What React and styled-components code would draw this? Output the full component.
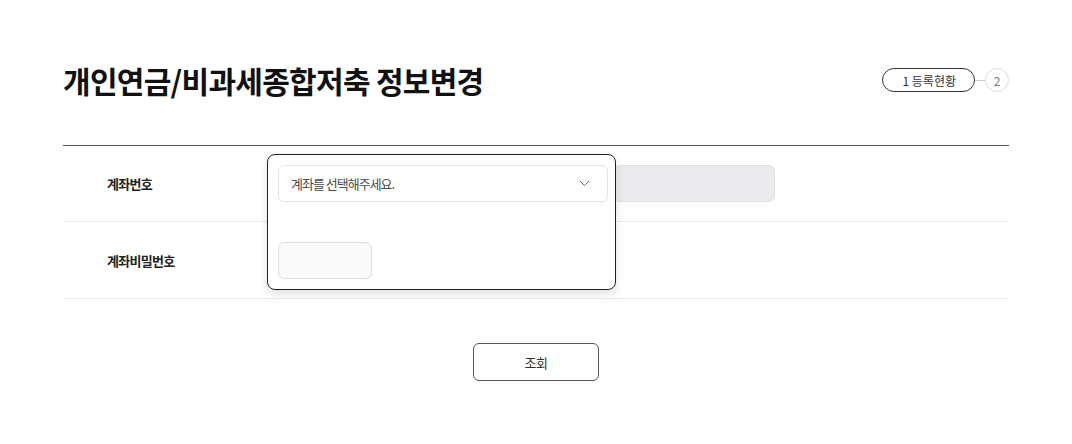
import React from 'react';
import styled, { createGlobalStyle } from 'styled-components';

const GlobalStyle = createGlobalStyle`
  * {
    box-sizing: border-box;
  }

  body {
    margin: 0;
    background: #fff;
    font-family: 'Noto Sans CJK KR', 'Noto Sans', sans-serif;
    color: #222;
  }
`;

const Page = styled.main`
  width: 946px;
  margin: 0 auto;
  padding-top: 56px;
`;

const Header = styled.header`
  display: flex;
  align-items: center;
  justify-content: space-between;
  height: 48px;
`;

const Title = styled.h1`
  margin: 0;
  font-size: 30px;
  font-weight: 700;
  letter-spacing: -0.7px;
  color: #111;
  line-height: 48px;
`;

const Stepper = styled.ol`
  display: flex;
  align-items: center;
  list-style: none;
  margin: 0;
  padding: 0;
`;

const Step = styled.li`
  display: flex;
  align-items: center;
  justify-content: center;
  height: 24px;
  min-width: 24px;
  padding: ${(props) => (props.$active ? '0 18px 0 19px' : '0')};
  border: 1px solid ${(props) => (props.$active ? '#333' : '#ddd')};
  border-radius: 12px;
  font-size: 12px;
  color: ${(props) => (props.$active ? '#333' : '#777')};
`;

const StepLine = styled.span`
  width: 10px;
  height: 1px;
  background: #ccc;
`;

const Table = styled.section`
  position: relative;
  margin-top: 41px;
  border-top: 1px solid #555;
`;

const Row = styled.div`
  display: grid;
  grid-template-columns: 215px 1fr;
  align-items: center;
  height: ${(props) => props.$height}px;
  border-bottom: 1px solid #ebebeb;
`;

const Label = styled.div`
  padding-left: 44px;
  font-size: 13px;
  font-weight: 700;
  letter-spacing: -0.7px;
  color: #222;
`;

const Field = styled.div`
  display: flex;
  align-items: center;
  gap: 6px;
`;

const Select = styled.div`
  position: relative;
  z-index: 2;
  display: flex;
  align-items: center;
  justify-content: space-between;
  width: 330px;
  height: 37px;
  padding: 0 17px 0 12px;
  border: 1px solid #e3e3e3;
  border-radius: 6px;
  background: #fff;
  font-size: 13px;
  letter-spacing: -1px;
  color: #4a4a4a;
`;

const Input = styled.div`
  position: relative;
  z-index: ${(props) => (props.$disabled ? 0 : 2)};
  width: ${(props) => props.$width}px;
  height: 37px;
  border: 1px solid #e0e0e0;
  border-radius: 6px;
  background: ${(props) => (props.$disabled ? '#ebebed' : '#fafafa')};
`;

const Popover = styled.div`
  position: absolute;
  z-index: 1;
  top: 8px;
  left: 204px;
  width: 349px;
  height: 136px;
  border: 1px solid #1f1f2a;
  border-radius: 8px;
  background: #fff;
  box-shadow: 0 4px 10px rgba(0, 0, 0, 0.12);
`;

const Actions = styled.div`
  display: flex;
  justify-content: center;
  margin-top: 44px;
`;

const Button = styled.button`
  width: 126px;
  height: 38px;
  border: 1px solid #555;
  border-radius: 6px;
  background: #fff;
  font-family: inherit;
  font-size: 13px;
  letter-spacing: -0.5px;
  color: #333;
`;

function Chevron() {
  return (
    <svg width="11" height="7" viewBox="0 0 11 7" fill="none">
      <polyline points="1,1 5.5,5.5 10,1" stroke="#666" strokeWidth="1" />
    </svg>
  );
}

function App() {
  return (
    <>
      <GlobalStyle />
      <Page>
        <Header>
          <Title>개인연금/비과세종합저축 정보변경</Title>
          <Stepper>
            <Step $active>1 등록현황</Step>
            <StepLine />
            <Step>2</Step>
          </Stepper>
        </Header>

        <Table>
          <Popover />
          <Row $height={76}>
            <Label>계좌번호</Label>
            <Field>
              <Select>
                계좌를 선택해주세요.
                <Chevron />
              </Select>
              <Input $disabled $width={161} />
            </Field>
          </Row>
          <Row $height={77}>
            <Label>계좌비밀번호</Label>
            <Field>
              <Input $width={94} />
            </Field>
          </Row>
        </Table>

        <Actions>
          <Button type="button">조회</Button>
        </Actions>
      </Page>
    </>
  );
}

export default App;
